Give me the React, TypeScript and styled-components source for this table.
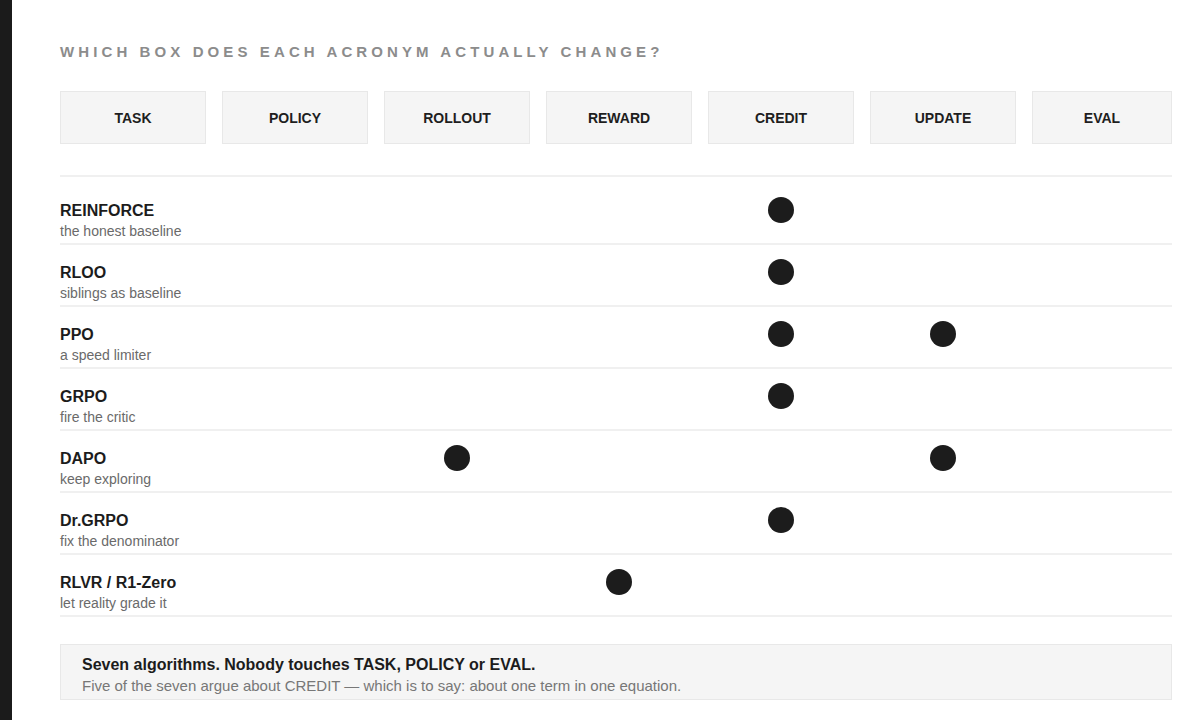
import React from "react";
import styled, { createGlobalStyle } from "styled-components";

const GlobalStyle = createGlobalStyle`
  html, body { margin: 0; padding: 0; background: #ffffff; }
  body { font-family: "Liberation Sans", Arial, Helvetica, sans-serif; color: #1c1c1c; }
`;

const Frame = styled.div`
  display: flex;
  min-height: 720px;
`;

const SideBar = styled.div`
  width: 12px;
  flex: 0 0 12px;
  background: #1b1b1b;
`;

const Main = styled.main`
  flex: 1;
  padding: 42px 28px 0 48px;
`;

const Heading = styled.h2`
  margin: 0;
  font-size: 15px;
  line-height: 20px;
  font-weight: 700;
  letter-spacing: 4.1px;
  color: #8c8c8c;
  text-transform: uppercase;
`;

const Columns = styled.div`
  display: grid;
  grid-template-columns: repeat(6, 146px) 1fr;
  column-gap: 16px;
`;

const HeaderRow = styled(Columns)`
  margin-top: 29px;
  padding-bottom: 31px;
  border-bottom: 2px solid #f0f0f0;
`;

const HeaderBox = styled.div`
  height: 53px;
  box-sizing: border-box;
  display: flex;
  align-items: center;
  justify-content: center;
  background: #f5f5f5;
  border: 1px solid #e8e8e8;
  font-size: 14px;
  font-weight: 700;
  color: #1e1e1e;
`;

const List = styled.div`
  padding-top: 6px;
`;

const Row = styled(Columns)`
  padding: 18px 0 3px;
  border-bottom: 2px solid #f0f0f0;
  align-items: start;
`;

const Label = styled.div`
  grid-column: 1;
  grid-row: 1;
  white-space: nowrap;
`;

const Name = styled.div`
  font-size: 16px;
  line-height: 20px;
  font-weight: 700;
  color: #1c1c1c;
`;

const Sub = styled.div`
  margin-top: 2px;
  font-size: 14px;
  line-height: 17px;
  color: #6a6a6a;
`;

const Dot = styled.span<{ $col: number }>`
  grid-column: ${(p) => p.$col};
  grid-row: 1;
  justify-self: center;
  margin-top: -4px;
  width: 26px;
  height: 26px;
  border-radius: 50%;
  background: #1c1c1c;
`;

const Callout = styled.div`
  margin-top: 27px;
  padding: 10px 21px 4px;
  background: #f5f5f5;
  border: 1px solid #e8e8e8;
`;

const CalloutTitle = styled.div`
  font-size: 16px;
  line-height: 20px;
  font-weight: 700;
  color: #1c1c1c;
`;

const CalloutSub = styled.div`
  margin-top: 2px;
  font-size: 15px;
  line-height: 18px;
  color: #777777;
`;

const COLUMNS = ["TASK", "POLICY", "ROLLOUT", "REWARD", "CREDIT", "UPDATE", "EVAL"];

const ROWS: { name: string; sub: string; dots: string[] }[] = [
  { name: "REINFORCE", sub: "the honest baseline", dots: ["CREDIT"] },
  { name: "RLOO", sub: "siblings as baseline", dots: ["CREDIT"] },
  { name: "PPO", sub: "a speed limiter", dots: ["CREDIT", "UPDATE"] },
  { name: "GRPO", sub: "fire the critic", dots: ["CREDIT"] },
  { name: "DAPO", sub: "keep exploring", dots: ["ROLLOUT", "UPDATE"] },
  { name: "Dr.GRPO", sub: "fix the denominator", dots: ["CREDIT"] },
  { name: "RLVR / R1-Zero", sub: "let reality grade it", dots: ["REWARD"] },
];

export default function App() {
  return (
    <>
      <GlobalStyle />
      <Frame>
        <SideBar />
        <Main>
          <Heading>Which box does each acronym actually change?</Heading>
          <HeaderRow>
            {COLUMNS.map((c) => (
              <HeaderBox key={c}>{c}</HeaderBox>
            ))}
          </HeaderRow>
          <List>
            {ROWS.map((r) => (
              <Row key={r.name}>
                <Label>
                  <Name>{r.name}</Name>
                  <Sub>{r.sub}</Sub>
                </Label>
                {r.dots.map((d) => (
                  <Dot key={d} $col={COLUMNS.indexOf(d) + 1} />
                ))}
              </Row>
            ))}
          </List>
          <Callout>
            <CalloutTitle>Seven algorithms. Nobody touches TASK, POLICY or EVAL.</CalloutTitle>
            <CalloutSub>
              Five of the seven argue about CREDIT — which is to say: about one term in one equation.
            </CalloutSub>
          </Callout>
        </Main>
      </Frame>
    </>
  );
}
